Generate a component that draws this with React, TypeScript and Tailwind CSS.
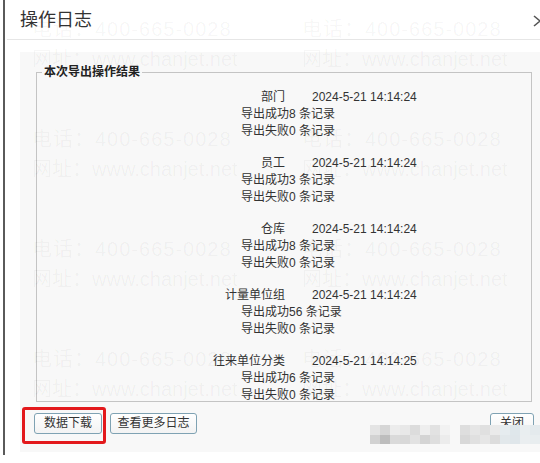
import React from "react";

const groups = [
  { name: "部门", time: "2024-5-21 14:14:24", ok: 8, fail: 0 },
  { name: "员工", time: "2024-5-21 14:14:24", ok: 3, fail: 0 },
  { name: "仓库", time: "2024-5-21 14:14:24", ok: 8, fail: 0 },
  { name: "计量单位组", time: "2024-5-21 14:14:24", ok: 56, fail: 0 },
  { name: "往来单位分类", time: "2024-5-21 14:14:25", ok: 6, fail: 0 },
];

const markRows = [30, 140, 250, 360];
const markCols = [32, 302];

// pixelated strip at the foot of the dialog
const mosaicTop = ["#e4e4e4", "#d6d6d6", "#ececec", "#e8e8e8", "#dcdcdc", "#eeeeee", "#e2e2e2", "#f2f2f2", "#f4f4f4", "#dedede", "#e6e6e6", "#e0e0e0", "#eaeaea", "#e6ecef", "#dfe7eb", "#e9eef0", "#e4eaed"];
const mosaicBottom = ["#d2d2d2", "#bdbdbd", "#dadada", "#d8d8d8", "#e2e2e2", "#d4d4d4", "#dedede", "#ececec", "#f0f0f0", "#d8d8d8", "#e0e0e0", "#e6e6e6", "#dcdcdc", "#e2e8eb", "#dfe6ea", "#eaeef0", "#e8edef"];

function Watermark() {
  return (
    <div className="pointer-events-none absolute inset-0 z-20 select-none">
      {markRows.map((y) =>
        markCols.map((x) => (
          <React.Fragment key={`${x}-${y}`}>
            <div
              className="absolute whitespace-nowrap text-[20px] leading-[20px] tracking-[1px] text-[rgba(0,0,0,0.045)]"
              style={{ left: x, top: y - 11 }}
            >
              电话：400-665-0028
            </div>
            <div
              className="absolute whitespace-nowrap text-[20px] leading-[20px] text-[rgba(0,0,0,0.045)]"
              style={{ left: x, top: y + 19 }}
            >
              网址：www.chanjet.net
            </div>
          </React.Fragment>
        ))
      )}
    </div>
  );
}

function Btn({ children, className = "" }: { children: React.ReactNode; className?: string }) {
  return (
    <button
      className={`h-[21px] rounded-[3px] border border-[#7fa2b3] bg-gradient-to-b from-white to-[#f3f3f3] text-[12px] leading-[19px] text-[#333] ${className}`}
    >
      {children}
    </button>
  );
}

export default function App() {
  return (
    <div
      className="relative h-[463px] w-[540px] overflow-hidden bg-white text-[#333]"
      style={{ fontFamily: '"Liberation Sans", "Noto Sans CJK SC", sans-serif' }}
    >
      <div className="flex h-full">
        {/* window edge */}
        <div className="flex w-[7px] shrink-0 pl-[3px]">
          <div className="h-[455px] w-[2px] bg-[#5a5a5a]" />
        </div>

        <div className="flex min-w-0 flex-1 flex-col">
          {/* header */}
          <div className="relative flex h-[40px] shrink-0 items-center border-b border-[#e6e6e6] pl-[13px]">
            <span className="text-[18px] leading-[20px] text-[#333]">操作日志</span>
            <svg className="absolute left-[526px] top-[15px]" width="14" height="12" viewBox="0 0 14 12">
              <path d="M1 1 L7 6 L1 11" fill="none" stroke="#555" strokeWidth="1.6" />
            </svg>
          </div>

          {/* body */}
          <div className="pt-[12px] pl-[13px]">
            <div className="flex h-[400px] flex-col bg-[#f8f8f8] pl-[16px] pr-[8px] pt-[14px]">
              <fieldset className="h-[336px] border border-[#c4c4c4] px-0 pb-0 pt-[10px]">
                <legend className="ml-[5px] px-[2px] text-[12px] font-bold leading-[13px] text-[#222]">
                  本次导出操作结果
                </legend>
                <div className="flex flex-col gap-[15px] text-[12px] leading-[17px]">
                  {groups.map((g) => (
                    <div key={g.name} className="flex flex-col">
                      <div className="flex">
                        <span className="w-[248px] text-right">{g.name}</span>
                        <span className="ml-[27px]">{g.time}</span>
                      </div>
                      <div className="pl-[204px]">导出成功{g.ok} 条记录</div>
                      <div className="pl-[204px]">导出失败{g.fail} 条记录</div>
                    </div>
                  ))}
                </div>
              </fieldset>

              <div className="mt-[11px] flex items-start">
                <div className="-ml-[2px] flex gap-[8px]">
                  <Btn className="w-[68px]">数据下载</Btn>
                  <Btn className="w-[87px]">查看更多日志</Btn>
                </div>
                <Btn className="ml-auto mr-[-2px] w-[44px]">关闭</Btn>
              </div>
            </div>
          </div>
        </div>
      </div>

      {/* highlight around the download button */}
      <div className="pointer-events-none absolute left-[22px] top-[407px] z-30 h-[37px] w-[84px] rounded-[3px] border-[3px] border-[#e3191c]" />

      {/* pixelated strip */}
      <div className="pointer-events-none absolute left-[370px] top-[425px] z-30 flex flex-col">
        <div className="flex">
          {mosaicTop.map((c, i) => (
            <div key={i} className="h-[10px] w-[10px]" style={{ background: i === 8 ? "transparent" : c }} />
          ))}
        </div>
        <div className="flex">
          {mosaicBottom.map((c, i) => (
            <div key={i} className="h-[9px] w-[10px]" style={{ background: i === 8 ? "transparent" : c }} />
          ))}
        </div>
      </div>

      <Watermark />
    </div>
  );
}
